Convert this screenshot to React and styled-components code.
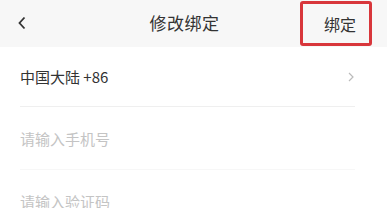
import React from "react";
import styled, { createGlobalStyle } from "styled-components";

const Global = createGlobalStyle`
  html, body { margin: 0; padding: 0; background: #fff; }
  body { font-family: "Noto Sans CJK SC", "Noto Sans", sans-serif; overflow: hidden; }
`;

const Page = styled.div`
  width: 387px;
  height: 208px;
  overflow: hidden;
  background: #fff;
  display: flex;
  flex-direction: column;
`;

const Header = styled.div`
  flex-shrink: 0;
  height: 47px;
  background: #f7f7f7;
  display: grid;
  grid-template-columns: 80px 1fr 90px;
  align-items: start;
`;

const Back = styled.div`
  padding-left: 17px;
  height: 46px;
  display: flex;
  align-items: center;
`;

const Title = styled.div`
  height: 46px;
  line-height: 46px;
  text-align: center;
  font-size: 17px;
  color: #333;
  letter-spacing: 0.5px;
  padding-right: 8px;
`;

const Action = styled.div`
  justify-self: end;
  margin-right: 15px;
  margin-top: 1px;
  width: 72px;
  height: 45px;
  box-sizing: border-box;
  border: 3px solid #d8363b;
  border-radius: 3px;
  display: flex;
  align-items: center;
  justify-content: center;
  padding-left: 8px;
  font-size: 16px;
  color: #333;
`;

const List = styled.div`
  flex-shrink: 0;
  padding: 0 32px 0 20px;
  display: flex;
  flex-direction: column;
`;

const Row = styled.div`
  flex-shrink: 0;
  height: ${(p) => p.h}px;
  display: flex;
  align-items: center;
  justify-content: space-between;
  border-bottom: ${(p) => (p.line ? `1px solid ${p.line}` : "none")};
  font-size: 15px;
  color: ${(p) => (p.muted ? "#c4c4c4" : "#333")};
`;

export default function App() {
  return (
    <>
      <Global />
      <Page>
        <Header>
          <Back>
            <svg width="10" height="14" viewBox="0 0 10 14">
              <path d="M7.5 1.5 L2.5 7 L7.5 12.5" fill="none" stroke="#333" strokeWidth="1.8" />
            </svg>
          </Back>
          <Title>修改绑定</Title>
          <Action>绑定</Action>
        </Header>
        <List>
          <Row h={59} line="#efefef">
            <span>中国大陆 +86</span>
            <svg width="8" height="12" viewBox="0 0 8 12">
              <path d="M2 2 L6 6 L2 10" fill="none" stroke="#bbb" strokeWidth="1.2" />
            </svg>
          </Row>
          <Row h={62} muted line="#f7f7f7">请输入手机号</Row>
          <Row h={62} muted>请输入验证码</Row>
        </List>
      </Page>
    </>
  );
}
